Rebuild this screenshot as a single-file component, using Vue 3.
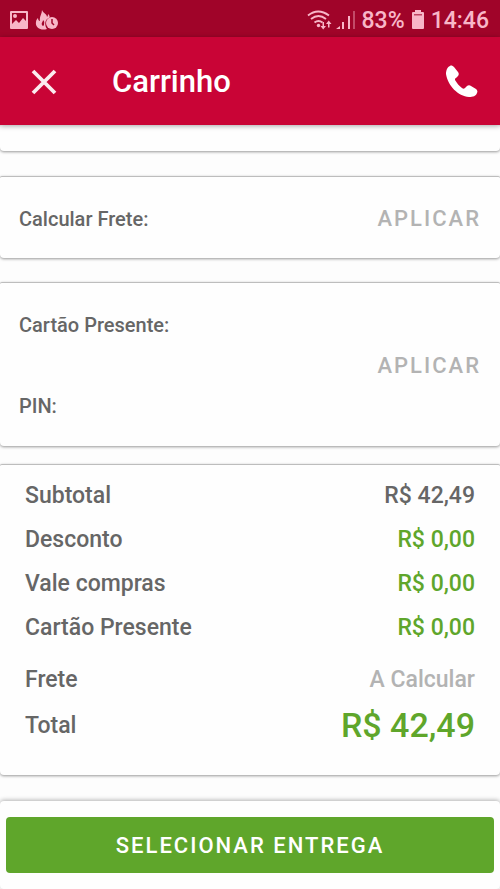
<script setup>
import { ref } from 'vue'

const zip = ref('')
const giftCard = ref('')
const pin = ref('')

const rows = [
  { label: 'Subtotal', value: 'R$ 42,49', kind: 'plain' },
  { label: 'Desconto', value: 'R$ 0,00', kind: 'green' },
  { label: 'Vale compras', value: 'R$ 0,00', kind: 'green' },
  { label: 'Cartão Presente', value: 'R$ 0,00', kind: 'green' },
  { label: 'Frete', value: 'A Calcular', kind: 'muted' },
  { label: 'Total', value: 'R$ 42,49', kind: 'total' },
]
</script>

<template>
  <div class="screen">
    <div class="status">
      <div class="status-group notices">
        <svg width="20" height="20" viewBox="0 0 20 20" aria-hidden="true">
          <path fill="currentColor" fill-rule="evenodd" d="M2 1h16a1 1 0 0 1 1 1v16a1 1 0 0 1-1 1H2a1 1 0 0 1-1-1V2a1 1 0 0 1 1-1zm1 2v11l4-4 3 3 4-5 3 3V3zM6 4a2 2 0 1 1 0 4 2 2 0 0 1 0-4z" />
        </svg>
        <svg width="24" height="20" viewBox="0 0 24 20" aria-hidden="true">
          <path fill="currentColor" d="M7 0c1 3 5 4 5 7 1-1 1-2 1-3 2 2 2 3 1 4-4 1-5 7-2 11-7 2-12-2-11-7 0-2 1-3 2-4 0 2 1 3 2 3C4 7 7 4 7 0z" />
          <path fill="#a00429" d="M8 10c2 2 1 3 1 5 0 1-2 1-2 0-1-2 1-3 1-5z" />
          <circle cx="17" cy="13" r="6" fill="currentColor" />
          <path d="M17 9v4l2 2" fill="none" stroke="#a00429" stroke-width="1.5" />
        </svg>
      </div>
      <div class="status-group">
        <svg width="26" height="20" viewBox="0 0 26 20" aria-hidden="true">
          <g fill="none" stroke="currentColor" stroke-width="1.9">
            <path d="M1 5.500q10-8 21 0M4 9q7.500-6 15 0M7.500 12.500q4-3 8 0" />
          </g>
          <circle cx="11.500" cy="15.500" r="1.700" fill="currentColor" />
          <path fill="currentColor" d="M15.500 12h1.500v4h2l-2.800 3.500L13.500 16h2zM22.500 17.500H21V14h-2l2.700-3.500L24.500 14h-2z" />
        </svg>
        <svg width="20" height="20" viewBox="0 0 20 20" aria-hidden="true">
          <path fill="currentColor" d="M0 19l4-3v3zM6 12h2v7H6zM12 6h2v13h-2z" />
          <path fill="currentColor" opacity=".4" d="M17 1h2v18h-2z" />
        </svg>
        <span class="battery-level">83%</span>
        <svg width="14" height="20" viewBox="0 0 14 20" aria-hidden="true">
          <path fill="currentColor" d="M4 0h6v2h2a1 1 0 0 1 1 1v15a1 1 0 0 1-1 1H2a1 1 0 0 1-1-1V3a1 1 0 0 1 1-1h2z" />
          <path fill="#a00429" opacity=".65" d="M3 4h8v1.500H3z" />
        </svg>
        <span>14:46</span>
      </div>
    </div>

    <header class="bar">
      <button class="icon-button" type="button" aria-label="Fechar">
        <svg width="26" height="26" viewBox="0 0 26 26">
          <path d="M2 2l22 22M24 2L2 24" stroke="#fff" stroke-opacity=".92" stroke-width="3.800" />
        </svg>
      </button>
      <h1>Carrinho</h1>
      <button class="icon-button" type="button" aria-label="Ligar">
        <svg width="34" height="34" viewBox="0 0 34 34">
          <path fill="#fff" d="M5 1C2 2 1 6 1 9c2 12 12 22 23 23 4 0 7-1 8-4 1-2 0-3-1-4l-5-3c-1-1-3-1-4 0l-2 2c-1 1-2 1-3 0-3-2-5-5-7-8 0-1 0-2 1-2l2-2c1-1 1-3 0-4L9 2C8 1 6 0 5 1z" />
        </svg>
      </button>
    </header>

    <main class="content">
      <div class="card previous"></div>

      <form class="card shipping" @submit.prevent>
        <div class="field">
          <label for="zip">Calcular Frete:</label>
          <input id="zip" v-model="zip" type="text" />
        </div>
        <button class="apply" type="submit">APLICAR</button>
      </form>

      <form class="card gift" @submit.prevent>
        <div class="fields">
          <div class="field">
            <label for="gift-card">Cartão Presente:</label>
            <input id="gift-card" v-model="giftCard" type="text" />
          </div>
          <div class="field">
            <label for="pin">PIN:</label>
            <input id="pin" v-model="pin" type="text" />
          </div>
        </div>
        <button class="apply" type="submit">APLICAR</button>
      </form>

      <dl class="card summary">
        <div v-for="row in rows" :key="row.label" class="row" :class="row.kind">
          <dt>{{ row.label }}</dt>
          <dd>{{ row.value }}</dd>
        </div>
      </dl>
    </main>

    <footer class="footer">
      <button class="primary" type="button">SELECIONAR ENTREGA</button>
    </footer>
  </div>
</template>

<style>
body {
  margin: 0;
  background: #fdfdfd;
}
</style>

<style scoped>
.screen {
  display: flex;
  flex-direction: column;
  min-height: 100vh;
  box-sizing: border-box;
  font-family: Roboto, "Liberation Sans", sans-serif;
  font-weight: 500;
  color: #666;
}

button {
  border: 0;
  padding: 0;
  background: none;
  font: inherit;
  cursor: pointer;
}

svg {
  display: block;
  flex: none;
}

.status {
  display: flex;
  justify-content: space-between;
  align-items: center;
  height: 37px;
  padding: 3px 11px 0 9px;
  box-sizing: border-box;
  background: #a00429;
  color: #f8b7c8;
  font-size: 23px;
}

.status-group {
  display: flex;
  align-items: center;
  gap: 6px;
}

.status-group svg + svg {
  margin-left: -3px;
}

.notices {
  gap: 9px;
}

.bar {
  position: relative;
  z-index: 1;
  display: flex;
  align-items: center;
  height: 88px;
  padding: 1px 21px 0 31px;
  box-sizing: border-box;
  background: #c90436;
  box-shadow: 0 1px 5px rgba(0, 0, 0, 0.35);
  color: #fff;
}

h1 {
  flex: 1;
  margin: 0 0 0 55px;
  font-size: 31px;
  line-height: 40px;
  font-weight: 500;
}

.content {
  flex: 1;
  display: flex;
  flex-direction: column;
}

.card {
  box-sizing: border-box;
  border-top: 1px solid #bdbdbd;
  border-radius: 2px 2px 4px 4px;
  background: #fefefe;
  box-shadow: 0 1px 3px rgba(0, 0, 0, 0.4);
}

.previous {
  height: 26px;
  border-top: 0;
}

.shipping,
.gift {
  display: flex;
  align-items: center;
  padding: 2px 19px 0;
}

.shipping {
  height: 82px;
  margin-top: 25px;
}

.gift {
  height: 164px;
  margin-top: 24px;
}

.fields {
  flex: 1;
}

.field {
  flex: 1;
  display: flex;
  align-items: center;
  height: 81px;
  font-size: 20px;
}

.field label {
  flex: none;
}

.field input {
  flex: 1;
  min-width: 0;
  padding: 8px;
  border: 0;
  outline: 0;
  background: transparent;
  color: inherit;
  font: inherit;
}

.apply {
  color: #b3b3b3;
  font-size: 22px;
  line-height: 32px;
  letter-spacing: 2px;
}

.summary {
  margin: 18px 0 0;
  padding: 8px 25px 26px;
  font-size: 23px;
}

.row {
  display: flex;
  justify-content: space-between;
  align-items: center;
  height: 44px;
}

.row dd {
  margin: 0;
}

.green dd,
.total dd {
  color: #5fa62b;
}

.muted {
  margin-top: 8px;
}

.muted dd {
  color: #b3b3b3;
}

.total {
  height: 48px;
}

.total dd {
  font-size: 34px;
}

.footer {
  margin-top: 26px;
  padding: 16px 6px;
  border-radius: 4px;
  background: #fefefe;
  box-shadow: 0 -1px 4px rgba(0, 0, 0, 0.3);
}

.primary {
  display: block;
  width: 100%;
  height: 56px;
  border-radius: 4px;
  background: #5fa62b;
  color: #fff;
  font-size: 22px;
  letter-spacing: 2px;
}
</style>
